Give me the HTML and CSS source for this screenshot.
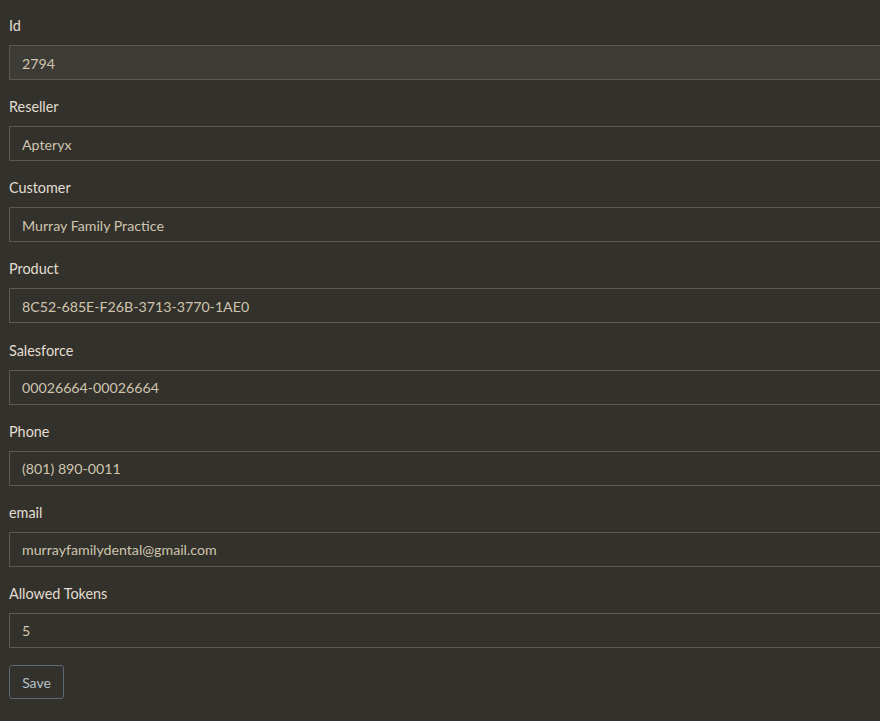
FILE: index.html
```html
<!DOCTYPE html>
<html>
<head>
<meta charset="utf-8">
<link rel="stylesheet" href="styles.css">
</head>
<body>
<form class="form">
  <div class="group"><label class="label">Id</label><input class="control readonly" value="2794" readonly></div>
  <div class="group"><label class="label">Reseller</label><input class="control" value="Apteryx"></div>
  <div class="group"><label class="label">Customer</label><input class="control" value="Murray Family Practice"></div>
  <div class="group"><label class="label">Product</label><input class="control" value="8C52-685E-F26B-3713-3770-1AE0"></div>
  <div class="group"><label class="label">Salesforce</label><input class="control" value="00026664-00026664"></div>
  <div class="group"><label class="label">Phone</label><input class="control" value="(801) 890-0011"></div>
  <div class="group"><label class="label">email</label><input class="control" value="murrayfamilydental@gmail.com"></div>
  <div class="group"><label class="label">Allowed Tokens</label><input class="control" value="5"></div>
  <button type="button" class="btn">Save</button>
</form>
</body>
</html>
```
FILE: styles.css
```css
html, body {
  margin: 0;
  background: #33312c;
  overflow: hidden;
}
body {
  padding: 15px 0 0 9px;
  font-family: Lato, "Open Sans", sans-serif;
  font-size: 14px;
}
.form {
  width: 1000px;
  display: flex;
  flex-direction: column;
  align-items: flex-start;
}
.group {
  display: flex;
  flex-direction: column;
  width: 100%;
  margin-bottom: 16.14px;
}
.label {
  color: #e2ddd0;
  font-size: 14.4px;
  line-height: 21px;
  height: 21px;
  margin-bottom: 9px;
}
.control {
  box-sizing: border-box;
  height: 35px;
  width: 100%;
  padding: 1px 12px 0;
  border: 1px solid #5b5953;
  background: #33312c;
  color: #cfc5ae;
  font-family: inherit;
  font-size: 14.2px;
  outline: none;
  border-radius: 0;
}
.control.readonly {
  background: #3d3b36;
}
.btn {
  box-sizing: border-box;
  width: 55px;
  height: 34px;
  margin-top: 1px;
  border: 1px solid #5c6874;
  border-radius: 3px;
  background: transparent;
  color: #b6c2cb;
  font-family: inherit;
  font-size: 14px;
  padding: 0;
}
```
